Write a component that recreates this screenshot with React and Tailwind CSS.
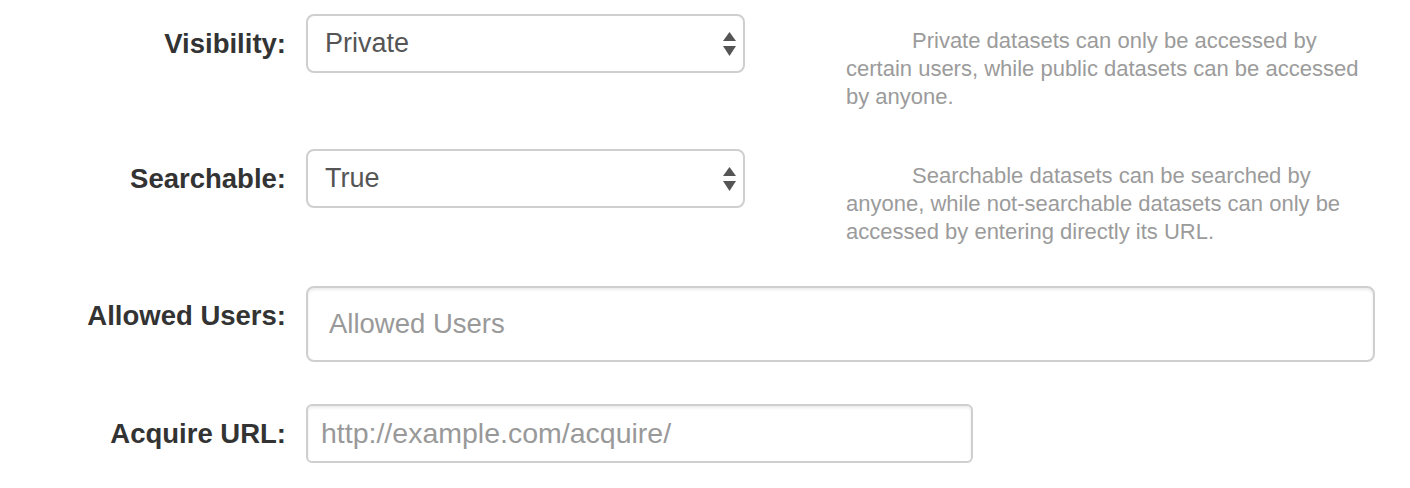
import React from "react";

const font = { fontFamily: '"Liberation Sans", Arial, Helvetica, sans-serif' };

function SelectArrows() {
  return (
    <svg
      className="pointer-events-none absolute right-[9px] top-1/2 -translate-y-1/2"
      width="13"
      height="26"
      viewBox="0 0 13 26"
    >
      <polygon points="6.5,1 13,10 0,10" fill="#555" />
      <polygon points="0,15 13,15 6.5,25" fill="#555" />
    </svg>
  );
}

function Field({ label, children, help, className = "" }) {
  return (
    <div className={"flex items-start " + className}>
      <label className="w-[286px] shrink-0 pt-[14px] text-right text-[27.5px] leading-[32px] font-bold text-[#333]">
        {label}
      </label>
      <div className="ml-[20px] flex items-start">
        {children}
        {help && (
          <p className="ml-[101px] mt-[13px] w-[530px] indent-[66px] text-[22px] leading-[28px] text-[#9b9b9b]">
            {help}
          </p>
        )}
      </div>
    </div>
  );
}

function Select({ value, options }) {
  return (
    <div className="relative w-[439px]">
      <select
        defaultValue={value}
        className="h-[59px] w-full appearance-none rounded-[8px] border-2 border-[#cfcfcf] bg-white pl-[17px] pr-10 text-[27px] text-[#555] outline-none"
        style={font}
      >
        {options.map((o) => (
          <option key={o}>{o}</option>
        ))}
      </select>
      <SelectArrows />
    </div>
  );
}

export default function App() {
  return (
    <div className="min-h-[488px] w-[1410px] bg-white pt-[14px]" style={font}>
      <div className="flex flex-col">
        {/* Visibility */}
        <Field
          className="mb-[38px]"
          label="Visibility:"
          help="Private datasets can only be accessed by certain users, while public datasets can be accessed by anyone."
        >
          <Select value="Private" options={["Private", "Public"]} />
        </Field>

        {/* Searchable */}
        <Field
          className="mb-[40px]"
          label="Searchable:"
          help="Searchable datasets can be searched by anyone, while not-searchable datasets can only be accessed by entering directly its URL."
        >
          <Select value="True" options={["True", "False"]} />
        </Field>

        {/* Allowed users */}
        <Field className="mb-[42px]" label="Allowed Users:">
          <input
            type="text"
            placeholder="Allowed Users"
            className="h-[76px] w-[1069px] rounded-[8px] border-2 border-[#cfcfcf] bg-white pl-[21px] text-[27.5px] text-[#555] shadow-[inset_0_2px_3px_rgba(0,0,0,0.08)] outline-none placeholder:text-[#999]"
            style={font}
          />
        </Field>

        {/* Acquire URL */}
        <Field label="Acquire URL:">
          <input
            type="text"
            placeholder="http://example.com/acquire/"
            className="h-[59px] w-[667px] rounded-[6px] border-2 border-[#cfcfcf] bg-white pl-[13px] text-[28.5px] text-[#555] shadow-[inset_0_2px_3px_rgba(0,0,0,0.08)] outline-none placeholder:text-[#999]"
            style={font}
          />
        </Field>
      </div>
    </div>
  );
}
